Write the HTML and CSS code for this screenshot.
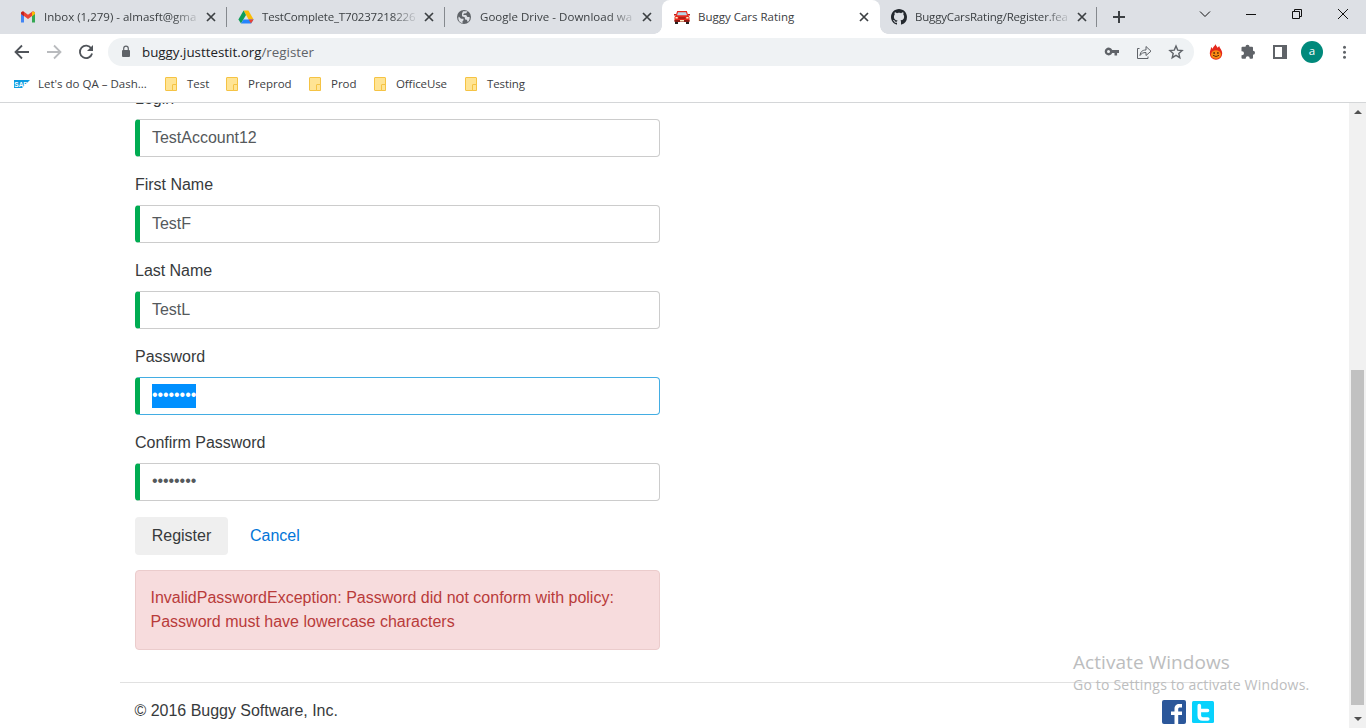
FILE: index.html
```html
<!DOCTYPE html>
<html lang="en">
<head>
<meta charset="utf-8">
<title>Buggy Cars Rating</title>
<link rel="stylesheet" href="styles.css">
</head>
<body>
<div class="browser">
  <header class="tabstrip">
    <div class="tab inbox">
      <svg class="favicon" viewBox="0 0 16 16"><path d="M1 13.500V4.500l3 2.200v6.800z" fill="#4285f4"/><path d="M12 6.700l3-2.200v9h-3z" fill="#34a853"/><path d="M1 4.500C1 2.500 3 2 4.300 3L8 5.800 11.700 3C13 2 15 2.500 15 4.500L12 7 8 10 4 7z" fill="#ea4335"/><path d="M12 3l1-.5c1.200 0 2 .8 2 2V5l-3 2.200z" fill="#fbbc04"/><path d="M1 5V4.500c0-1.200.8-2 2-2l1 .5v4.200z" fill="#c5221f"/></svg>
      <span class="tab-title fade">Inbox (1,279) - almasft@gma</span>
      <svg class="close" viewBox="0 0 10 10"><path d="M1 1l8 8M9 1l-8 8"/></svg>
    </div>
    <div class="tab drive">
      <svg class="favicon" viewBox="0 0 16 16"><path d="M5.600 1.500h4.800l5.200 9h-5z" fill="#fbbc04"/><path d="M5.600 1.500L.4 10.500 3 14.500 8 6z" fill="#0f9d58"/><path d="M5.500 10.500h10.100L13 14.500H3z" fill="#2684fc"/><path d="M10.600 10.500h5L13 14.500z" fill="#ea4335"/></svg>
      <span class="tab-title fade">TestComplete_T70237218226</span>
      <svg class="close" viewBox="0 0 10 10"><path d="M1 1l8 8M9 1l-8 8"/></svg>
    </div>
    <div class="tab download">
      <svg class="favicon" viewBox="0 0 16 16"><circle cx="8" cy="8" r="7" fill="#5f6368"/><path d="M2.800 7.500L5 9.700h2.500v1.600l-1 1v2C4 13.800 2.300 11.500 2.300 9zM7 2.300h4.500l-1.300 1.900-2.200.3-.8 1.500h3l1.200 1.900h2.200c.3 2-.3 3.600-1.800 5l-1-2.100-1.700-.4-.4-2.200L6 7.300V4.500z" fill="#dde0e5"/></svg>
      <span class="tab-title fade">Google Drive - Download wa</span>
      <svg class="close" viewBox="0 0 10 10"><path d="M1 1l8 8M9 1l-8 8"/></svg>
    </div>
    <div class="tab active">
      <svg class="favicon" viewBox="0 0 16 16"><path d="M3.200 2h9.600l1.500 4.500 1.200 1.500V12H.5V8L1.700 6.500z" fill="#e8281c"/><path d="M4 3.200h8l1 3H3z" fill="#b9d3e4"/><path d="M0 5h2v1.500H0zM14 5h2v1.500h-2z" fill="#c32017"/><path d="M1 12h3v3H1zM12 12h3v3h-3z" fill="#222"/><path d="M.5 11h15v2H.5z" fill="#8c1912"/><path d="M4.500 8.500h7V9.500h-7z" fill="#7a1711"/><path d="M1.500 8h2.200v1.500H1.500zM12.300 8h2.200v1.500h-2.200zM6 11h4v1.500H6z" fill="#fff1c5"/></svg>
      <span class="tab-title">Buggy Cars Rating</span>
      <svg class="close" viewBox="0 0 10 10"><path d="M1 1l8 8M9 1l-8 8"/></svg>
    </div>
    <div class="tab github">
      <svg class="favicon" viewBox="0 0 16 16"><path fill="#24292f" d="M8 0C3.580 0 0 3.580 0 8c0 3.540 2.290 6.530 5.470 7.590.4.070.55-.17.55-.38 0-.19-.01-.82-.01-1.490-2.010.37-2.530-.49-2.690-.94-.09-.23-.48-.94-.82-1.130-.28-.15-.68-.52-.01-.53.63-.01 1.080.58 1.230.82.720 1.210 1.870.87 2.330.66.070-.52.28-.87.51-1.070-1.780-.2-3.640-.89-3.640-3.950 0-.87.31-1.590.82-2.150-.08-.2-.36-1.020.08-2.120 0 0 .67-.21 2.200.82.640-.18 1.320-.27 2-.27s1.360.09 2 .27c1.530-1.040 2.200-.82 2.200-.82.440 1.100.16 1.920.08 2.120.51.56.82 1.270.82 2.150 0 3.070-1.870 3.750-3.650 3.950.29.25.54.73.54 1.480 0 1.070-.01 1.930-.01 2.200 0 .21.15.46.55.38A8.010 8.010 0 0 0 16 8c0-4.420-3.580-8-8-8z"/></svg>
      <span class="tab-title fade">BuggyCarsRating/Register.fea</span>
      <svg class="close" viewBox="0 0 10 10"><path d="M1 1l8 8M9 1l-8 8"/></svg>
    </div>
    <svg class="new-tab" viewBox="0 0 12 12"><path d="M6 0v12M0 6h12"/></svg>
    <div class="window-controls">
      <svg viewBox="0 0 12 12"><path d="M1 3.500l5 5 5-5"/></svg>
      <svg viewBox="0 0 12 12"><path d="M1 6.500h10"/></svg>
      <svg viewBox="0 0 12 12"><path d="M1.500 3.500h7v7h-7zM3.500 3.500v-2h7v7h-2"/></svg>
      <svg viewBox="0 0 12 12"><path d="M1 1l10 10M11 1L1 11"/></svg>
    </div>
  </header>

  <nav class="toolbar">
    <div class="nav-buttons">
      <svg viewBox="0 0 16 16"><path d="M15 8H2M8 1.500L1.500 8 8 14.500"/></svg>
      <svg class="disabled" viewBox="0 0 16 16"><path d="M1 8h13M8 1.500L14.500 8 8 14.500"/></svg>
      <svg viewBox="0 0 16 16"><path d="M13.300 4.500A6.200 6.200 0 1 0 14.100 9.500"/><path class="solid" d="M15 1v6H9z"/></svg>
    </div>
    <div class="omnibox">
      <svg class="lock" viewBox="0 0 10 14"><path d="M2 5h6q1 0 1 1v5q0 1-1 1H2q-1 0-1-1V6q0-1 1-1z" fill="#5f6368"/><path d="M2.700 5.500V3.500a2.300 2.300 0 0 1 4.600 0v2" fill="none" stroke="#5f6368" stroke-width="1.200"/></svg>
      <span class="url">buggy.justtestit.org<span class="path">/register</span></span>
      <div class="omni-actions">
        <svg viewBox="0 0 16 16"><path fill="#5f6368" fill-rule="evenodd" d="M8.200 6A3.900 3.900 0 1 0 8.200 9H10.500v2.500h2.600V9H15V6zM4.500 6a1.500 1.500 0 1 1 0 3 1.500 1.500 0 0 1 0-3z"/></svg>
        <svg viewBox="0 0 16 16"><path class="thin" d="M3.500 4.500H1.500v10h10.500V12.500"/><path class="thin" d="M4 11.500c.5-4 2.500-5.500 6-5.500V2.500L15 7.200l-5 4.300V8.500c-3 0-4.500.8-6 3z"/></svg>
        <svg viewBox="0 0 16 16"><path class="star" d="M8 2l1.700 4.100 4.400.4-3.300 2.900 1 4.300L8 11.400l-3.800 2.300 1-4.300L1.900 6.500l4.400-.4z"/></svg>
      </div>
    </div>
    <div class="extensions">
      <svg viewBox="0 0 16 16"><path d="M7.500 0c.2 1.600 1.600 2.200 2 3.700L11.300 2c0 2 2.900 3.500 2.900 7.500a6.200 6.200 0 0 1-12.400 0c0-3 1.300-4 1.200-6.500l1.800 1.700C5 2.500 7.200 2 7.500 0z" fill="#e5281c"/><ellipse cx="8" cy="10.500" rx="5" ry="4.300" fill="#f98b12"/><path d="M5.500 8h1.200v2H5.500zM9.300 8h1.200v2H9.300z" fill="#51200b"/><path d="M5 11.300q3 2.500 6 0" fill="none" stroke="#51200b" stroke-width=".9"/></svg>
      <svg viewBox="0 0 16 16"><path fill="#5f6368" d="M5.500 2.800a2 2 0 1 1 4 0H12q1 0 1 1v3a2 2 0 1 1 0 4v3q0 1-1 1H9.700v-.5a2 2 0 0 0-4 0v.5H2.500q-1 0-1-1v-2.600H2a2 2 0 0 0 0-4h-.5V3.800q0-1 1-1z"/></svg>
      <svg viewBox="0 0 16 16"><path fill="#5f6368" fill-rule="evenodd" d="M1 1h14v14H1zM3 3v10h7V3z"/></svg>
      <span class="avatar">a</span>
      <svg viewBox="0 0 16 16" fill="#5f6368"><circle cx="8.500" cy="3.200" r="1.500"/><circle cx="8.500" cy="8.200" r="1.500"/><circle cx="8.500" cy="13.200" r="1.500"/></svg>
    </div>
  </nav>

  <div class="bookmarks">
    <div class="bookmark sap"><svg class="sap-logo" viewBox="0 0 16 8"><path d="M0 0h16L8 8H0z" fill="#0c9be0"/><text x="0.300" y="6.500">SAP</text></svg><span>Let's do QA – Dash...</span></div>
    <div class="bookmark b1"><i class="folder"></i><span>Test</span></div>
    <div class="bookmark b2"><i class="folder"></i><span>Preprod</span></div>
    <div class="bookmark b3"><i class="folder"></i><span>Prod</span></div>
    <div class="bookmark b4"><i class="folder"></i><span>OfficeUse</span></div>
    <div class="bookmark b5"><i class="folder"></i><span>Testing</span></div>
  </div>

  <div class="viewport">
    <main class="page">
      <form class="register">
        <div class="group"><label>Login</label><div class="field">TestAccount12</div></div>
        <div class="group"><label>First Name</label><div class="field">TestF</div></div>
        <div class="group"><label>Last Name</label><div class="field">TestL</div></div>
        <div class="group"><label>Password</label><div class="field focus"><span class="dots selected">••••••••</span></div></div>
        <div class="group"><label>Confirm Password</label><div class="field"><span class="dots">••••••••</span></div></div>
        <div class="actions"><span class="btn">Register</span><a class="cancel">Cancel</a></div>
        <div class="alert">InvalidPasswordException: Password did not conform with policy: Password must have lowercase characters</div>
      </form>
      <footer class="footer">
        <span>© 2016 Buggy Software, Inc.</span>
        <div class="social">
          <svg viewBox="0 0 24 24"><rect width="24" height="24" rx="2" fill="#2b579a"/><path d="M12.500 24v-9H9v-3.500h3.500V9c0-3.500 2-5 4.500-5h3v3.500h-2c-1.300 0-1.800.6-1.800 1.800v2.200H20V15h-3.800v9z" fill="#fff"/></svg>
          <svg viewBox="0 0 24 24"><rect x="1" y="1" width="22" height="22" rx="1.500" fill="#08d2fd"/><path d="M8.300 5.500v10q0 3.500 3.500 3.500h5M8.300 10.500H16.500" fill="none" stroke="#fff" stroke-width="3.600" stroke-linecap="round"/></svg>
        </div>
      </footer>
    </main>
    <div class="scrollbar"><i class="up"></i><i class="thumb"></i><i class="down"></i></div>
    <div class="watermark"><div class="wm-title">Activate Windows</div><div class="wm-sub">Go to Settings to activate Windows.</div></div>
  </div>
</div>
</body>
</html>
```

FILE: styles.css
```css
* { box-sizing: border-box; }
body { margin: 0; background: #fff; overflow: hidden; }
svg { display: block; flex: none; }
.browser { width: 1366px; height: 728px; display: flex; flex-direction: column; font: 12px "Open Sans", "Noto Sans", sans-serif; color: #3c4043; }

.tabstrip { height: 34px; flex: none; display: flex; align-items: center; background: #dde0e5; padding-left: 8px; }
.tab { width: 218px; height: 34px; display: flex; align-items: center; padding: 0 10px 0 12px; position: relative; flex: none; }
.tab::after { content: ""; position: absolute; right: -1px; top: 7px; width: 1px; height: 20px; background: #85898e; }
.tab.download::after, .tab.active::after { display: none; }
.tab.active { background: #fff; border-radius: 8px 8px 0 0; padding-right: 11px; }
.tab.active::before { content: ""; position: absolute; left: -8px; right: -8px; bottom: 0; height: 8px; background: radial-gradient(circle at 0 0, transparent 7.5px, #fff 8px) 0 0 / 8px 8px no-repeat, radial-gradient(circle at 100% 0, transparent 7.5px, #fff 8px) 100% 0 / 8px 8px no-repeat; }
.tab.github { width: 216px; padding-left: 11px; }
.favicon { width: 16px; height: 16px; margin-right: 8px; }
.tab-title { flex: 1; white-space: nowrap; font-size: 11.5px; line-height: 18px; }
.fade { -webkit-mask-image: linear-gradient(90deg, #000 calc(100% - 24px), rgba(0, 0, 0, .15) 100%); mask-image: linear-gradient(90deg, #000 calc(100% - 24px), rgba(0, 0, 0, .15) 100%); }
.inbox .tab-title { letter-spacing: 0; }
.drive .tab-title { letter-spacing: -0.18px; }
.download .tab-title { letter-spacing: 0.03px; }
.github .tab-title { letter-spacing: -0.18px; }
.close { width: 10px; height: 10px; margin-left: 9px; fill: none; stroke: #3c4043; stroke-width: 1.7; }
.new-tab { width: 12px; height: 12px; margin-left: 17px; fill: none; stroke: #3c4043; stroke-width: 2; }
.window-controls { margin-left: auto; display: flex; gap: 34px; padding: 0 17px 6px 0; }
.window-controls svg { width: 12px; height: 12px; fill: none; stroke: #111; stroke-width: 1; }

.toolbar { height: 35px; flex: none; display: flex; align-items: center; padding: 1px 12px 0 14px; }
.nav-buttons { display: flex; gap: 16px; width: 94px; }
.nav-buttons svg { width: 16px; height: 16px; fill: none; stroke: #50545a; stroke-width: 1.8; }
.nav-buttons .disabled { stroke: #b9bbbe; }
.nav-buttons .solid { fill: #50545a; stroke: none; }
.omnibox { width: 1086px; height: 28px; border-radius: 14px; background: #eff2f4; display: flex; align-items: center; padding: 0 10px 0 13px; }
.lock { width: 10px; height: 14px; margin-right: 11px; }
.url { font-size: 13.35px; line-height: 20px; color: #202124; }
.path { color: #5f6368; }
.omni-actions { margin-left: auto; display: flex; gap: 16px; }
.omni-actions svg { width: 16px; height: 16px; }
.thin { fill: none; stroke: #5f6368; stroke-width: 1; }
.star { fill: none; stroke: #5f6368; stroke-width: 1.4; }
.extensions { display: flex; gap: 16px; align-items: center; margin-left: 14px; }
.extensions svg { width: 16px; height: 16px; }
.avatar { width: 22px; height: 22px; margin: 0 -3px; border-radius: 50%; background: #00897b; color: #fff; font-size: 11.5px; line-height: 20px; text-align: center; }

.bookmarks { height: 34px; flex: none; display: flex; border-bottom: 1px solid #d4d6d8; padding: 0 0 4px 14px; }
.bookmark { display: flex; align-items: center; white-space: nowrap; font-size: 11.5px; letter-spacing: -0.03px; }
.bookmark span { padding-bottom: 1px; }
.sap { width: 151px; letter-spacing: 0; }
.sap-logo { width: 16px; height: 8px; margin-right: 8px; }
.sap-logo text { font: bold 6.5px "Liberation Sans", sans-serif; fill: #fff; }
.b1 { width: 61px; }
.b2 { width: 83px; }
.b3 { width: 65px; }
.b4 { width: 91px; }
.b4, .b5 { letter-spacing: -0.1px; }
.folder { width: 12px; height: 14px; margin-right: 10px; background: #ffe494; border: 1px solid #f5c344; border-radius: 1px; position: relative; }
.folder::after { content: ""; position: absolute; right: -1px; bottom: -1px; width: 3px; height: 5px; border: 1px solid #f5c344; border-radius: 1px; background: #ffe494; }

.viewport { flex: 1; min-height: 0; display: flex; overflow: hidden; position: relative; font: 16px/24px "Liberation Sans", Arial, sans-serif; letter-spacing: -0.02px; color: #373a3c; }
.page { width: 1349px; padding: 0 119px 0 120px; }
.register { width: 540px; padding: 0 0 0 15px; margin-top: -16px; }
.group { margin-bottom: 16px; }
.group label { display: block; height: 24px; margin-bottom: 8px; }
.field { height: 38px; border: 1px solid #ccc; border-left: 5px solid #00ac52; border-radius: 4px; padding: 6px 12px; color: #55595c; }
.field.focus { border-color: #43ade3; border-left-color: #00ac52; }
.dots { display: block; height: 24px; line-height: 22px; letter-spacing: -0.08px; }
.selected { width: 44px; background: #0090ff; color: #fff; }
.actions { display: flex; align-items: center; }
.btn { width: 93px; height: 38px; border-radius: 4px; background: #efefef; padding: 7px 0; text-align: center; }
.cancel { color: #0275d8; margin-left: 22px; }
.alert { margin-top: 15px; height: 80px; border: 1px solid #ebcccc; border-radius: 4px; background: #f7dcdd; color: #b93b3a; padding: 15px 15px 15px 14.5px; letter-spacing: 0; }
.footer { margin-top: 32px; border-top: 1px solid #e1e1e1; display: flex; padding: 16px 15px 0 14.5px; }
.social { margin: 1px 0 0 auto; display: flex; gap: 5px; }
.social svg { width: 24px; height: 24px; }
.scrollbar { width: 17px; flex: none; background: #f1f1f1; display: flex; flex-direction: column; align-items: center; }
.up, .down { border: 4px solid transparent; }
.up { border-top: 0; border-bottom: 4px solid #505050; margin-top: 7px; }
.down { border-bottom: 0; border-top: 4px solid #505050; margin-top: 12px; }
.thumb { width: 13px; height: 335px; margin-top: 256px; background: #c1c1c1; }
.watermark { position: absolute; left: 1073px; top: 546px; font-family: "Open Sans", sans-serif; color: #bcbdbe; white-space: nowrap; }
.wm-title { font-size: 19px; line-height: 26px; letter-spacing: 0.06px; }
.wm-sub { font-size: 14px; line-height: 19px; letter-spacing: 0.2px; }
```
